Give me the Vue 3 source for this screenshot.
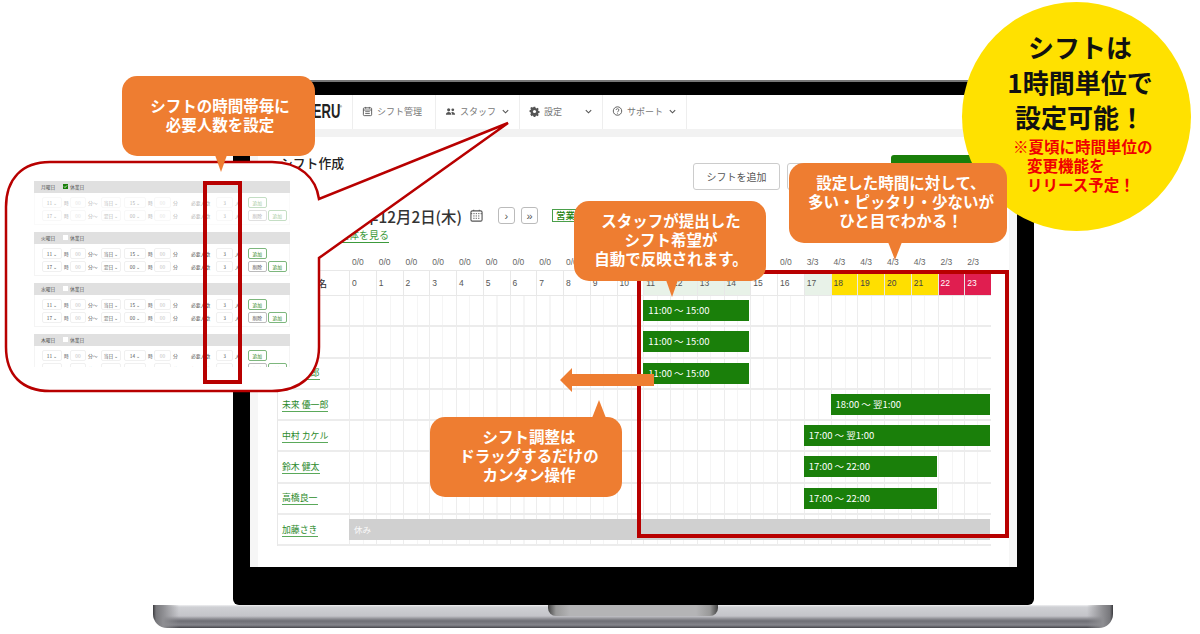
<template>
  <div class="stage">
    <!-- ノートPC本体 -->
    <div class="laptop">
      <div class="bezel">
        <div class="screen">
          <nav class="nav">
            <div class="logo"><span>ERU</span><sup>®</sup></div>
            <div class="nav-item w83">
              <svg viewBox="0 0 12 12" class="nav-icon"><rect x="1.5" y="2" width="9" height="8.5" rx="1" fill="none" stroke="#555" stroke-width="1"/><path d="M1.5 4.4h9M4 1v2M8 1v2M3.5 6.2h5M3.5 8.2h5" stroke="#555" stroke-width=".9" fill="none"/></svg>
              シフト管理
            </div>
            <div class="nav-item w84">
              <svg viewBox="0 0 12 12" class="nav-icon"><circle cx="4" cy="4.2" r="1.7" fill="#555"/><circle cx="8.5" cy="4.2" r="1.5" fill="#555"/><path d="M1 9.5c0-2 1.4-3 3-3s3 1 3 3zM7.8 9.5c0-1.2-.3-2-1-2.7 1.9-.6 4.2.3 4.2 2.7z" fill="#555"/></svg>
              スタッフ
              <svg viewBox="0 0 10 10" class="chev"><path d="M2 3.5l3 3 3-3" fill="none" stroke="#555" stroke-width="1.2"/></svg>
            </div>
            <div class="nav-item w83">
              <svg viewBox="0 0 12 12" class="nav-icon"><path d="M5 .8h2l.3 1.5 1.1.5 1.3-.8 1.4 1.4-.8 1.3.5 1.1 1.4.3v2l-1.4.3-.5 1.1.8 1.3-1.4 1.4-1.3-.8-1.1.5-.3 1.4H5l-.3-1.4-1.1-.5-1.3.8L.9 9.8l.8-1.3-.5-1.1L0 7V5l1.2-.3.5-1.1-.8-1.3 1.4-1.4 1.3.8 1.1-.5z" fill="#555" transform="translate(.6 .2) scale(.9)"/><circle cx="6" cy="6" r="1.7" fill="#fff"/></svg>
              設定
              <svg viewBox="0 0 10 10" class="chev"><path d="M2 3.5l3 3 3-3" fill="none" stroke="#555" stroke-width="1.2"/></svg>
            </div>
            <div class="nav-item w84">
              <svg viewBox="0 0 12 12" class="nav-icon"><circle cx="6" cy="5.5" r="4.6" fill="none" stroke="#555" stroke-width="1"/><path d="M4.4 4.4c0-2 3.2-2 3.2 0 0 1.2-1.6 1.2-1.6 2.5M6 8v.9" fill="none" stroke="#555" stroke-width=".9"/></svg>
              サポート
              <svg viewBox="0 0 10 10" class="chev"><path d="M2 3.5l3 3 3-3" fill="none" stroke="#555" stroke-width="1.2"/></svg>
            </div>
          </nav>
          <div class="band"></div>

          <main class="panel">
            <div class="title-row">
              <h1 class="title">シフト作成</h1>
              <div class="actions">
                <button class="btn w87">シフトを追加</button>
                <button class="btn w96">シフト公開</button>
                <button class="btn-green"></button>
              </div>
            </div>

            <div class="date-row">
              <span class="date">2021年12月2日(木)</span>
              <svg viewBox="0 0 14 14" class="date-cal"><rect x="1" y="2" width="12" height="11" rx="1.5" fill="none" stroke="#555" stroke-width="1.2"/><path d="M1 5h12M4 .8v2.4M10 .8v2.4M3.5 7.5h7M3.5 10h7" stroke="#555" stroke-width="1" stroke-dasharray="1.4 1.2" fill="none"/></svg>
              <button class="pager first">›</button>
              <button class="pager">»</button>
              <span class="badge">営業</span>
            </div>
            <div class="link-row"><a class="all-link">全体を見る</a></div>

            <div class="counts">
              <span v-for="(c, i) in counts" :key="i">{{ c }}</span>
            </div>
            <div class="table">
              <div class="head-row">
                <div class="name head-name">スタッフ名</div>
                <div v-for="h in hours" :key="h" class="head-cell" :class="headClass(h)">{{ h }}</div>
              </div>
              <div v-for="r in rows" :key="r.name" class="row">
                <div class="name"><a>{{ r.name }}</a></div>
                <div v-for="h in hours" :key="h" class="cell"></div>
                <div class="bar" :class="{ off: r.off }" :style="barStyle(r)">{{ r.label }}</div>
              </div>
            </div>
          </main>
        </div>
      </div>
      <div class="base"><div class="notch"></div></div>
    </div>

    <!-- 赤枠: 時間帯のハイライト -->
    <div class="frame-hours"></div>

    <!-- 吹き出し: 必要人数の設定画面 -->
    <svg class="callout" viewBox="0 0 530 400">
      <path d="M50 162H272C300 162 316 178 319 199L508 123 319 258V347C319 375 300 391 272 391H50C22 391 6 375 6 347V207C6 179 22 162 50 162Z" fill="#fff" stroke="#b80000" stroke-width="2.5"/>
    </svg>
    <div class="mini">
      <section v-for="(d, i) in days" :key="d" class="mini-sec" :class="{ faded: i === 0 }">
        <div class="mini-head">
          <span class="mini-day">{{ d }}</span>
          <span class="mini-check" :class="{ on: i === 0 }">
            <svg v-if="i === 0" viewBox="0 0 5 5"><path d="M1 2.5l1 1 2-2" fill="none" stroke="#fff" stroke-width=".8"/></svg>
          </span>
          <span>休業日</span>
        </div>
        <div class="mini-body">
          <div v-for="(t, j) in miniRows" :key="j" class="mini-row">
            <span class="sel w20">{{ t.from }} ⌄</span><span class="u w8">時</span>
            <span class="box w16 dim">00</span><span class="u w15">分〜</span>
            <span class="sel w20">{{ t.day }} ⌄</span><span class="sel w22 ml3">{{ j === 0 && i === 3 ? 14 : t.to }} ⌄</span><span class="u w8">時</span>
            <span class="box w17 dim">00</span><span class="u w18">分</span>
            <span class="u w27">必要人数</span>
            <span class="box w17">3</span><span class="u w15">人</span>
            <span v-if="j === 1" class="mini-btn gray">削除</span>
            <span class="mini-btn">追加</span>
          </div>
        </div>
      </section>
    </div>
    <div class="frame-people"></div>

    <div class="bubble b1">シフトの時間帯毎に<br>必要人数を設定</div>

    <div class="circle">
      <p class="circle-main">シフトは<br>1時間単位で<br>設定可能！</p>
      <p class="circle-note">※夏頃に時間単位の<br><span>変更機能を</span><br><span>リリース予定！</span></p>
    </div>

    <div class="bubble b2">スタッフが提出した<br>シフト希望が<br>自動で反映されます。</div>
    <div class="bubble b3">設定した時間に対して、<br>多い・ピッタリ・少ないが<br>ひと目でわかる！</div>
    <div class="bubble b4">シフト調整は<br>ドラッグするだけの<br>カンタン操作</div>

    <svg class="arrow" viewBox="0 0 94 24"><path d="M0 12L12 0V6H94V18H12V24Z" fill="#ee7d31"/></svg>
  </div>
</template>

<script setup>
const HOUR = 26.75

const hours = Array.from({ length: 24 }, (_, i) => i)

const counts = hours.map((h) => {
  if (h >= 22) return '2/3'
  if (h >= 18) return '4/3'
  if (h === 17 || (h >= 11 && h <= 14)) return '3/3'
  return '0/0'
})

const rows = [
  { name: '山田 太郎', from: 11, to: 15, label: '11:00 〜 15:00' },
  { name: '佐藤 花子', from: 11, to: 15, label: '11:00 〜 15:00' },
  { name: '田中 一郎', from: 11, to: 15, label: '11:00 〜 15:00' },
  { name: '未来 優一郎', from: 18, to: 24, label: '18:00 〜 翌1:00' },
  { name: '中村 カケル', from: 17, to: 24, label: '17:00 〜 翌1:00' },
  { name: '鈴木 健太', from: 17, to: 22, label: '17:00 〜 22:00' },
  { name: '高橋良一', from: 17, to: 22, label: '17:00 〜 22:00' },
  { name: '加藤さき', from: 0, to: 24, label: '休み', off: true }
]

const days = ['月曜日', '火曜日', '水曜日', '木曜日']

const miniRows = [
  { from: 11, day: '当日', to: 15 },
  { from: 17, day: '翌日', to: '00' }
]

const headClass = (h) => {
  if (h >= 22) return 'over'
  if (h >= 18) return 'many'
  if (h === 17 || (h >= 11 && h <= 14)) return 'fit'
  return ''
}

const barStyle = (r) => ({
  left: `${71 + r.from * HOUR}px`,
  width: `${(r.to - r.from) * HOUR - 1}px`
})
</script>

<style>
html, body {
  margin: 0;
  background: #fff;
}
</style>

<style scoped>
* {
  box-sizing: border-box;
}

.stage {
  position: relative;
  width: 1200px;
  height: 634px;
  overflow: hidden;
  background: #fff;
  font-family: "Noto Sans CJK JP", "Liberation Sans", sans-serif;
  color: #333;
}

/* ノートPC */
.laptop {
  padding: 80px 0 0 233px;
}

.bezel {
  width: 801px;
  height: 525px;
  padding: 15px 17px 38px;
  background: #000;
  border-top: 2px solid #777;
  border-radius: 10px 10px 6px 6px;
}

.screen {
  height: 472px;
  margin-top: -2px;
  background: #f6f6f6;
  display: flex;
  flex-direction: column;
  overflow: hidden;
}

.base {
  width: 960px;
  height: 23px;
  margin-left: -80px;
  border-radius: 0 0 14px 14px;
  background:
    linear-gradient(90deg, #3a3a3e 0, #77777b 3px, #8e8e92 10px, rgba(190,190,195,0) 26px, rgba(190,190,195,0) 934px, #8e8e92 950px, #77777b 957px, #3a3a3e 100%),
    linear-gradient(180deg, #f0f0f2 0, #cfd0d4 2px, #c4c4c9 11px, #8b8b91 14px, #6f6f75 16px, #85858b 20px, #45454a 23px);
}

.notch {
  width: 170px;
  height: 11px;
  margin: 0 auto;
  border-radius: 0 0 8px 8px;
  background: linear-gradient(90deg, #444 0, #999 8px, #b4b4b6 22px, #b4b4b6 148px, #999 162px, #444 100%);
}

/* ナビ */
.nav {
  height: 34px;
  background: #fff;
  display: flex;
  flex-shrink: 0;
  font-size: 9px;
  color: #777;
}

.logo {
  width: 103px;
  padding-right: 10px;
  display: flex;
  justify-content: flex-end;
  font-family: "Liberation Sans", sans-serif;
  font-size: 21px;
  font-weight: 700;
  line-height: 32px;
  color: #222;
  border-right: 1px solid #eee;
}

.logo span {
  display: block;
  margin-left: -30px;
  margin-right: -1px;
  transform: scaleX(.62);
  transform-origin: right;
}

.logo sup {
  font-size: 4px;
  font-weight: 400;
  line-height: 24px;
}

.nav-item {
  display: flex;
  align-items: center;
  gap: 4px;
  padding: 0 0 2px 9px;
  border-right: 1px solid #eee;
  white-space: nowrap;
}

.w83 { width: 83px; }
.w84 { width: 84px; }

.nav-icon {
  width: 11px;
  height: 11px;
  flex-shrink: 0;
}

.chev {
  width: 9px;
  height: 9px;
  margin-left: auto;
  margin-right: 9px;
}

.band {
  height: 8px;
  flex-shrink: 0;
  background: #f2f2f2;
}

.panel {
  flex: 1;
  margin: 0 8px;
  padding: 18px 18px 0 19px;
  background: #fff;
}

.title-row {
  height: 35px;
  display: flex;
  justify-content: space-between;
  padding-right: 19px;
}

.title {
  margin: 0;
  font-size: 12.8px;
  font-weight: 500;
  line-height: 16px;
  color: #222;
  padding-left: 3px;
}

.actions {
  display: flex;
  gap: 8px;
  align-items: flex-end;
}

.btn {
  height: 27px;
  padding: 0;
  background: #fff;
  border: 1px solid #ccc;
  border-radius: 3px;
  font: 400 10px "Noto Sans CJK JP", sans-serif;
  color: #555;
}

.w87 { width: 87px; margin-right: -1px; }
.w96 { width: 96px; }

.btn-green {
  width: 81px;
  height: 35px;
  border: 0;
  border-radius: 3px;
  background: #1a7f0a;
}

.date-row {
  height: 17px;
  margin-top: 17px;
  display: flex;
  align-items: center;
  padding-left: 51px;
}

.date {
  font-size: 15.4px;
  font-weight: 500;
  color: #333;
  white-space: nowrap;
}

.date-cal {
  width: 13px;
  height: 13px;
  margin-left: 8px;
}

.pager {
  width: 17px;
  height: 17px;
  padding: 0;
  margin-left: 6px;
  background: #fff;
  border: 1px solid #bbb;
  border-radius: 3px;
  font: 400 11px/14px "Liberation Sans", sans-serif;
  color: #555;
}

.pager.first {
  margin-left: 15px;
}

.badge {
  margin-left: 14px;
  padding: 0 3px;
  height: 13px;
  border: 1px solid #4a9f4a;
  font-size: 9.5px;
  font-weight: 500;
  line-height: 11px;
  color: #1a7f0a;
}

.link-row {
  display: flex;
  height: 14px;
  margin-top: 5px;
  padding-left: 62px;
}

.all-link {
  height: 14px;
  font-size: 10px;
  line-height: 12px;
  color: #3c9a3c;
  border-bottom: 1px solid #3c9a3c;
}

.counts {
  display: grid;
  grid-template-columns: repeat(24, 26.75px);
  height: 15px;
  margin-top: 12px;
  padding-left: 72px;
  padding-top: 2px;
  font: 8.5px/11px "Liberation Sans", sans-serif;
  color: #666;
}

.counts span {
  padding-left: 3px;
}

.table {
  width: 714px;
  border-left: 1px solid #e8e8e8;
}

.head-row,
.row {
  position: relative;
  display: grid;
  grid-template-columns: 71px repeat(24, 26.75px);
}

.head-row {
  height: 26px;
  border-top: 1px solid #e8e8e8;
  border-bottom: 1px solid #e8e8e8;
}

.row {
  height: 31.3px;
  border-bottom: 2px solid #ececec;
}

.name {
  padding-left: 4px;
  font-size: 8.9px;
  display: flex;
  align-items: center;
  white-space: nowrap;
}

.head-name {
  font-size: 9px;
  font-weight: 500;
  color: #333;
}

.name a {
  line-height: 13px;
  color: #2b8a2b;
  border-bottom: 1.5px solid #5aa95a;
}

.head-cell {
  padding: 6px 0 0 2px;
  font: 8.5px/12px "Liberation Sans", sans-serif;
  color: #555;
  border-left: 1px solid #e8e8e8;
}

.head-cell.fit { background: #e8f2e8; }
.head-cell.many { background: #ffdf00; color: #444; }
.head-cell.over { background: #e01e50; color: #fff; }

.cell {
  border-left: 1px solid #ededed;
  background: linear-gradient(90deg, transparent 12.5px, #f5f5f5 12.5px, #f5f5f5 13.5px, transparent 13.5px);
}

.bar {
  position: absolute;
  top: 4px;
  height: 21px;
  padding-left: 5px;
  background: #1a7f0a;
  font: 9.5px/20px "Noto Sans CJK JP", sans-serif;
  color: #fff;
  white-space: nowrap;
}

.bar.off {
  background: #d0d0d0;
  font-size: 8.5px;
  color: #fafafa;
}

/* 赤枠 */
.frame-hours {
  position: absolute;
  left: 637px;
  top: 270px;
  width: 372px;
  height: 268px;
  border: 4px solid #b80000;
}

.frame-people {
  position: absolute;
  left: 203px;
  top: 181px;
  width: 39px;
  height: 203px;
  border: 4px solid #b80000;
}

/* 吹き出しの枠 */
.callout {
  position: absolute;
  left: 0;
  top: 0;
  width: 530px;
  height: 400px;
}

.mini {
  position: absolute;
  left: 34px;
  top: 181px;
  width: 256px;
  height: 186px;
  overflow: hidden;
  font-size: 4.8px;
  color: #555;
}

.mini-sec {
  height: 51px;
}

.mini-head {
  height: 11.5px;
  padding-left: 7px;
  display: flex;
  align-items: center;
  background: #e0e0e0;
}

.mini-day {
  width: 22px;
}

.mini-check {
  width: 5px;
  height: 5px;
  margin-right: 2px;
  background: #fff;
}

.mini-check svg {
  display: block;
}

.mini-check.on {
  background: #1a7f0a;
}

.mini-body {
  height: 32.5px;
  padding: 3px 0 0 7px;
  border: solid #f4f4f4;
  border-width: 0 1px 1px;
}

.mini-row {
  height: 13.5px;
  display: flex;
  align-items: center;
}

.faded .mini-body {
  opacity: .45;
}

.sel,
.box {
  height: 11px;
  line-height: 9px;
  border: 1px solid #f0f0f0;
  border-radius: 2px;
  text-align: center;
  flex-shrink: 0;
}

.dim { color: #bbb; }
.u { flex-shrink: 0; padding-left: 2px; white-space: nowrap; }
.w8 { width: 8px; }
.w15 { width: 15px; }
.w16 { width: 16px; }
.w17 { width: 17px; }
.w18 { width: 18px; }
.w20 { width: 20px; }
.w22 { width: 22px; }
.w27 { width: 27px; }
.ml3 { margin-left: 3px; }

.mini-btn {
  width: 18.5px;
  height: 11px;
  margin-right: 1.5px;
  border: 1px solid #7db77d;
  border-radius: 2px;
  text-align: center;
  line-height: 9px;
  color: #1a7f0a;
  flex-shrink: 0;
}

.mini-btn.gray {
  border-color: #bbb;
  color: #555;
}

/* オレンジの吹き出し */
.bubble {
  position: absolute;
  display: flex;
  align-items: center;
  justify-content: center;
  padding-bottom: 3px;
  text-align: center;
  background: #ee7d31;
  border-radius: 15px;
  color: #fff;
  font-size: 15.5px;
  font-weight: 700;
  line-height: 19px;
  white-space: nowrap;
}

.bubble::after {
  content: '';
  position: absolute;
  width: 0;
  height: 0;
  border-style: solid;
  border-color: #ee7d31 transparent transparent;
}

.b1 { left: 122px; top: 76px; width: 193px; height: 80px; padding-left: 3px; }
.b1::after { left: 93px; top: 79px; border-width: 17px 6px 0; }
.b2 { left: 574px; top: 201px; width: 192px; height: 80px; padding-left: 2px; }
.b2::after { left: 92px; top: 79px; border-width: 17px 6px 0; }
.b3 { left: 789px; top: 163px; width: 218px; height: 80px; padding-left: 6px; }
.b3::after { left: 99px; top: 79px; border-width: 18px 7px 0; }
.b4 { left: 430px; top: 417px; width: 192px; height: 80px; padding-left: 6px; }
.b4::after {
  left: 162px;
  top: -17px;
  border-width: 0 7px 18px;
  border-color: transparent transparent #ee7d31;
}

.arrow {
  position: absolute;
  left: 560px;
  top: 368px;
  width: 94px;
  height: 24px;
}

/* 黄色の円 */
.circle {
  position: absolute;
  left: 962px;
  top: 2px;
  width: 229px;
  height: 229px;
  border-radius: 50%;
  background: #ffe100;
  text-align: center;
  white-space: nowrap;
}

.circle p {
  margin: 0;
}

.circle-main {
  padding: 27px 0 0 7px;
  font-size: 26px;
  font-weight: 700;
  line-height: 35px;
  color: #111;
}

.circle-note {
  margin-top: 3px !important;
  padding-left: 51px;
  text-align: left;
  font-size: 15.5px;
  font-weight: 700;
  line-height: 19px;
  color: #f00000;
}

.circle-note span {
  padding-left: 14px;
}
</style>
